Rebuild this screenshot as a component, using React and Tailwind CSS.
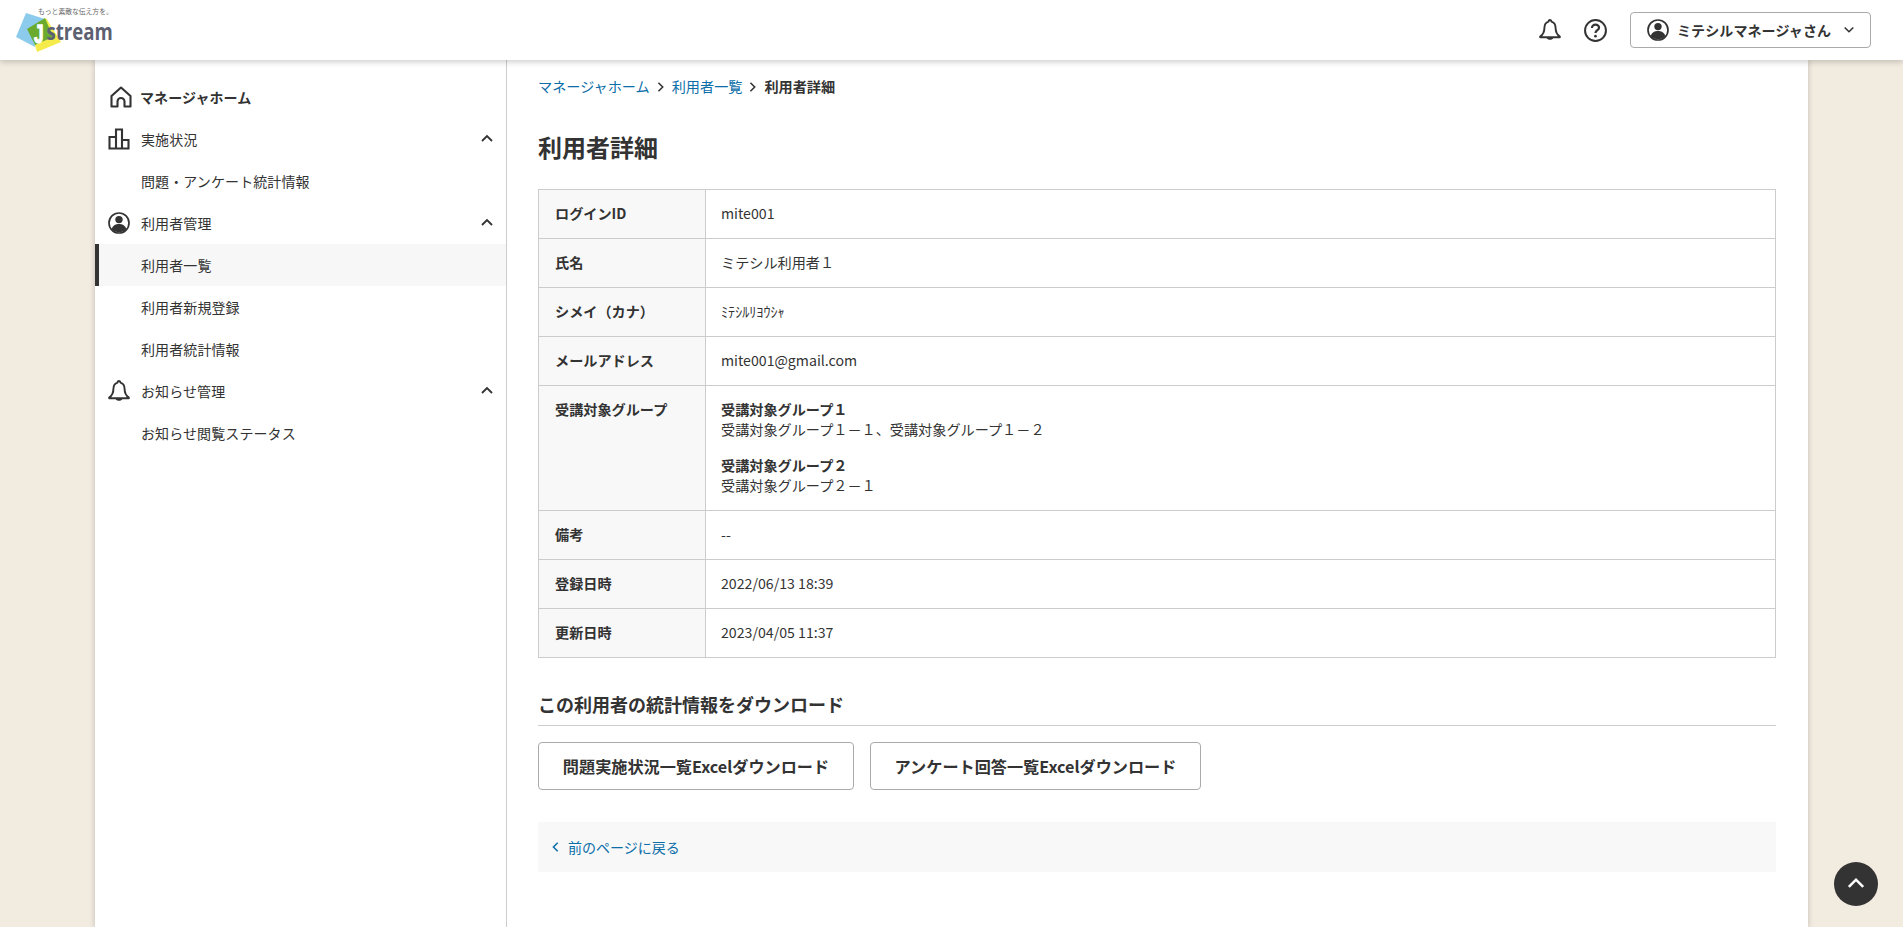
import React from "react";

const Chevron = ({ dir = "up", className = "" }) => {
  const d = {
    up: "M2 9 L7 4 L12 9",
    down: "M2 4 L7 9 L12 4",
    right: "M4 2 L9 7 L4 12",
    left: "M9 2 L4 7 L9 12",
  }[dir];
  return (
    <svg viewBox="0 0 14 14" fill="none" stroke="currentColor" strokeWidth="1.8" className={className}>
      <path d={d} />
    </svg>
  );
};

const HomeIcon = () => (
  <svg viewBox="0 0 22 22" fill="none" stroke="#333" strokeWidth="2.1" className="w-[22px] h-[22px]">
    <path d="M1.5 10 L11 1.5 L20.5 10 V20.5 H14.5 V15.5 A3.5 3.5 0 0 0 7.5 15.5 V20.5 H1.5 Z" strokeLinejoin="round" />
  </svg>
);

const ChartIcon = () => (
  <svg viewBox="0 0 22 22" fill="none" stroke="#333" strokeWidth="2.1" className="w-[22px] h-[22px]">
    <path d="M1.5 9 H8 V20.5 H1.5 Z M8 1.5 H14 V20.5 H8 Z M14 12 H20.5 V20.5 H14 Z" />
  </svg>
);

const UserIcon = () => (
  <svg viewBox="0 0 22 22" className="w-[22px] h-[22px]">
    <circle cx="11" cy="11" r="10" fill="none" stroke="#333" strokeWidth="1.7" />
    <circle cx="11" cy="7.6" r="3.7" fill="#333" />
    <path d="M3.6 17 C5 13.2 8 12 11 12 C14 12 17 13.2 18.4 17 A10 10 0 0 1 3.6 17 Z" fill="#333" />
  </svg>
);

const BellIcon = () => (
  <svg viewBox="0 0 22 22" fill="none" stroke="#333" strokeWidth="1.9" className="w-[22px] h-[22px]">
    <path d="M11 1 C11.9 1 12.4 1.7 12.4 2.6 C15.4 3.4 16.6 6 16.6 9 C16.6 13 18 15.6 20.8 17.6 V18.2 H1.2 V17.6 C4 15.6 5.4 13 5.4 9 C5.4 6 6.6 3.4 9.6 2.6 C9.6 1.7 10.1 1 11 1 Z" strokeLinejoin="round" />
    <path d="M7.6 19 C8.4 21.4 13.6 21.4 14.4 19 Z" fill="#333" stroke="none" />
  </svg>
);

const HelpIcon = () => (
  <svg viewBox="0 0 22 22" fill="none" stroke="#333" className="w-[23px] h-[23px]">
    <circle cx="11" cy="11" r="10" strokeWidth="1.9" />
    <path d="M7.6 8.6 C7.6 6.6 9.2 5.4 11 5.4 C13 5.4 14.4 6.6 14.4 8.3 C14.4 10.6 11 10.8 11 13.4" strokeWidth="2.1" />
    <circle cx="11" cy="16.4" r="1.3" fill="#333" stroke="none" />
  </svg>
);

const Logo = () => (
  <svg viewBox="0 0 120 60" className="w-[120px] h-[60px] shrink-0">
    <polygon points="26,13 48,20 35,47 16,37" fill="#8ccbec" />
    <polygon points="46,18 61,42 37,52 33,38" fill="#f5ec4c" />
    <polygon points="27,29 45,18 53,37 35,45" fill="#6aab2e" />
    <text transform="translate(34 43) scale(0.66 1)" fontFamily="Liberation Sans, sans-serif" fontWeight="700" fontSize="26" fill="#fff" stroke="#fff" strokeWidth="1.3">J</text>
    <text transform="translate(46.5 40) scale(0.81 1)" fontFamily="Open Sans, sans-serif" fontWeight="700" fontSize="23" fill="#5c6070">stream</text>
    <text x="38" y="14" fontFamily="Noto Sans CJK JP, sans-serif" fontSize="6.8" fill="#666">もっと素敵な伝え方を。</text>
  </svg>
);

const groups = [
  {
    label: "実施状況",
    icon: <ChartIcon />,
    items: ["問題・アンケート統計情報"],
  },
  {
    label: "利用者管理",
    icon: <UserIcon />,
    items: ["利用者一覧", "利用者新規登録", "利用者統計情報"],
  },
  {
    label: "お知らせ管理",
    icon: <BellIcon />,
    items: ["お知らせ閲覧ステータス"],
  },
];

const Sidebar = () => (
  <aside className="w-[412px] shrink-0 border-r border-[#ccc] pt-4 text-[14px] tracking-[0.1px]">
    <div className="h-[42px] flex items-center pl-[15px] font-bold">
      <HomeIcon />
      <span className="ml-[8px]">マネージャホーム</span>
    </div>
    {groups.map((g) => (
      <div key={g.label}>
        <div className="h-[42px] flex items-center pl-[13px] pr-[12px]">
          {g.icon}
          <span className="ml-[11px] flex-1">{g.label}</span>
          <Chevron dir="up" className="w-[14px] h-[14px]" />
        </div>
        {g.items.map((item) =>
          item === "利用者一覧" ? (
            <div key={item} className="h-[42px] flex items-center pl-[42px] bg-[#f7f7f7] border-l-4 border-[#333]">
              {item}
            </div>
          ) : (
            <div key={item} className="h-[42px] flex items-center pl-[46px]">
              {item}
            </div>
          )
        )}
      </div>
    ))}
  </aside>
);

const rows = [
  ["ログインID", "mite001"],
  ["氏名", "ミテシル利用者１"],
  ["シメイ（カナ）", "ﾐﾃｼﾙﾘﾖｳｼｬ"],
  ["メールアドレス", "mite001@gmail.com"],
  ["受講対象グループ", null],
  ["備考", "--"],
  ["登録日時", "2022/06/13 18:39"],
  ["更新日時", "2023/04/05 11:37"],
];

const DetailTable = () => (
  <table className="w-full table-fixed border-collapse text-[14.15px]">
    <tbody>
      {rows.map(([label, value]) =>
        value === null ? (
          <tr key={label}>
            <th className="w-[167px] border border-[#ccc] bg-[#f8f8f8] px-4 pt-[13px] text-left align-top font-bold leading-[20px]">
              {label}
            </th>
            <td className="border border-[#ccc] px-[15px] pt-[13px] pb-[15px] leading-[20px]">
              <div className="font-bold">受講対象グループ１</div>
              <div className="mb-4">受講対象グループ１－１、受講対象グループ１－２</div>
              <div className="font-bold">受講対象グループ２</div>
              <div>受講対象グループ２－１</div>
            </td>
          </tr>
        ) : (
          <tr key={label} className="h-[49px]">
            <th className="w-[167px] border border-[#ccc] bg-[#f8f8f8] px-4 text-left font-bold">{label}</th>
            <td className="border border-[#ccc] px-[15px]">{value}</td>
          </tr>
        )
      )}
    </tbody>
  </table>
);

export default function App() {
  return (
    <div
      className="min-h-screen bg-[#f2ebe0] text-[#333] flex flex-col"
      style={{ fontFamily: '"Noto Sans CJK JP", "Noto Sans", sans-serif' }}
    >
      <header className="h-[60px] bg-white shadow-[0_2px_6px_rgba(0,0,0,0.2)] flex items-center relative z-10">
        <Logo />
        <div className="ml-auto flex items-center pr-[32px]">
          <BellIcon />
          <div className="ml-[23px] flex">
            <HelpIcon />
          </div>
          <button className="ml-[23px] w-[241px] h-[36px] bg-white border border-[#aaa] rounded-[4px] flex items-center pl-[16px] pr-[15px] text-[14px] font-bold tracking-[0.1px]">
            <UserIcon />
            <span className="ml-[8px] flex-1 text-left">ミテシルマネージャさん</span>
            <Chevron dir="down" className="w-[12px] h-[12px]" />
          </button>
        </div>
      </header>

      <div className="flex-1 mx-[95px] bg-white flex shadow-[0_0_6px_rgba(0,0,0,0.2)]">
        <Sidebar />
        <main className="flex-1 pl-[31px] pr-[32px] pt-[15px] pb-[56px] text-[14.15px]">
          <nav className="h-[22px] flex items-center pt-[1px]">
            <a className="text-[#0b6ea8]">マネージャホーム</a>
            <Chevron dir="right" className="w-[12px] h-[12px] mx-[5px]" />
            <a className="text-[#0b6ea8]">利用者一覧</a>
            <Chevron dir="right" className="w-[12px] h-[12px] mx-[5px]" />
            <span className="font-bold">利用者詳細</span>
          </nav>
          <h1 className="mt-[32px] mb-[24px] text-[24px] leading-[36px] font-bold">利用者詳細</h1>
          <DetailTable />
          <h2 className="mt-[33px] pb-[7px] border-b border-[#ccc] text-[18px] leading-[27px] font-bold">
            この利用者の統計情報をダウンロード
          </h2>
          <div className="mt-[16px] flex gap-4">
            <button className="w-[316px] h-[48px] bg-white border border-[#aaa] rounded-[4px] text-[16.15px] font-bold">
              問題実施状況一覧Excelダウンロード
            </button>
            <button className="w-[331px] h-[48px] bg-white border border-[#aaa] rounded-[4px] text-[16.15px] font-bold">
              アンケート回答一覧Excelダウンロード
            </button>
          </div>
          <div className="mt-[32px] h-[50px] bg-[#f8f8f8] flex items-center pl-[12px] text-[14px] text-[#0b6ea8]">
            <Chevron dir="left" className="w-[12px] h-[12px]" />
            <span className="ml-[6px]">前のページに戻る</span>
          </div>
        </main>
      </div>

      <button className="fixed right-[25px] bottom-[21px] w-[44px] h-[44px] rounded-full bg-[#333] text-white flex items-center justify-center">
        <Chevron dir="up" className="w-[20px] h-[20px]" />
      </button>
    </div>
  );
}
